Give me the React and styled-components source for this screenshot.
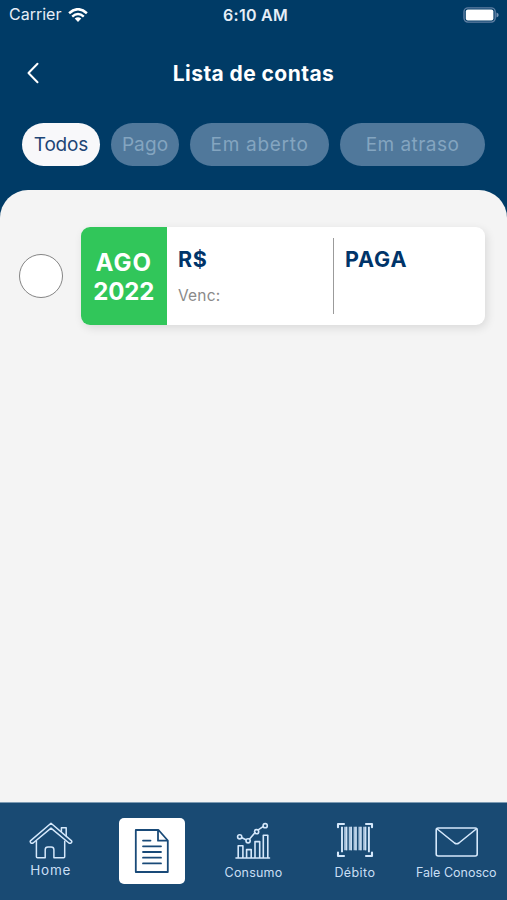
import React from 'react';
import styled, { createGlobalStyle } from 'styled-components';

const GlobalStyle = createGlobalStyle`
  *, *::before, *::after { box-sizing: border-box; }
  body { margin: 0; background: #f4f4f4; }
  h1 { margin: 0; }
  button { border: 0; padding: 0; background: none; font: inherit; color: inherit; }
  svg { display: block; }
`;

const Screen = styled.div`
  width: 507px;
  height: 900px;
  display: flex;
  flex-direction: column;
  overflow: hidden;
  background: #003b66;
  font-family: Inter, "Open Sans", sans-serif;
`;

const Text = styled.span`
  font-size: ${(p) => p.$size}px;
  font-weight: ${(p) => p.$weight || 400};
  letter-spacing: ${(p) => p.$track || 0}px;
  line-height: ${(p) => p.$line || p.$size * 1.2}px;
  white-space: nowrap;
`;

const StatusBar = styled.div`
  height: 30px;
  padding: 0 8px 0 9px;
  display: grid;
  grid-template-columns: 1fr auto 1fr;
  align-items: center;
  color: #e6eef7;
`;

const Carrier = styled.div`
  display: flex;
  align-items: center;
  gap: 7px;
`;

const Clock = styled(Text)`
  padding: 1px 0 0 3px;
`;

const BatterySlot = styled.div`
  justify-self: end;
`;

const TitleBar = styled.header`
  height: 93px;
  padding: 0 26px 7px;
  display: grid;
  grid-template-columns: 40px 1fr 40px;
  align-items: center;
  justify-items: center;
  color: #fff;
`;

const Title = styled(Text)`
  padding-top: 2px;
`;

const BackButton = styled.button`
  justify-self: start;
`;

const Filters = styled.div`
  height: 67px;
  padding: 0 22px;
  display: flex;
  align-items: flex-start;
  gap: 11px;
`;

const Pill = styled.button`
  flex: none;
  width: ${(p) => p.$width}px;
  height: 43px;
  padding-top: 2px;
  border-radius: 22px;
  display: flex;
  align-items: center;
  justify-content: center;
  background: ${(p) => (p.$active ? '#f8f8fa' : '#50789b')};
  color: ${(p) => (p.$active ? '#1d4676' : '#84a5c0')};
`;

const Content = styled.main`
  flex: 1;
  padding: 37px 22px 0 19px;
  border-radius: 28px 28px 0 0;
  background: #f4f4f4;
`;

const BillRow = styled.div`
  display: flex;
  align-items: center;
  gap: 17.5px;
`;

const Radio = styled.button`
  flex: none;
  width: 44px;
  height: 44px;
  border: 1.4px solid #858585;
  border-radius: 50%;
  background: #fff;
`;

const BillCard = styled.article`
  flex: 1;
  height: 98px;
  display: flex;
  border-radius: 9px;
  overflow: hidden;
  background: #fff;
  box-shadow: 2px 3px 10px rgba(0, 0, 0, 0.11);
`;

const Month = styled.div`
  width: 86.5px;
  padding-top: 2px;
  display: flex;
  flex-direction: column;
  align-items: center;
  justify-content: center;
  background: #31c65a;
  color: #fff;
`;

const Amount = styled.div`
  width: 166px;
  padding: 18px 0 0 11px;
  display: flex;
  flex-direction: column;
  gap: 9px;
  color: #003469;
`;

const Due = styled(Text)`
  color: #8a8a8a;
`;

const Divider = styled.div`
  width: 1px;
  height: 76px;
  margin-top: 11px;
  background: #9b9b9b;
`;

const Status = styled.div`
  padding: 18px 0 0 11px;
  color: #003469;
`;

const TabBar = styled.nav`
  height: 98px;
  display: grid;
  grid-template-columns: repeat(5, 1fr);
  border-top: 1px solid #7d9bb3;
  background: #194a73;
  color: #c9dff5;
`;

const Tab = styled.button`
  padding-top: ${(p) => p.$top}px;
  display: flex;
  flex-direction: column;
  align-items: center;
  gap: ${(p) => p.$gap || 0}px;
`;

const ActiveTile = styled.span`
  width: 66px;
  height: 66px;
  display: grid;
  place-items: center;
  border-radius: 5px;
  background: #fff;
`;

const Icon = styled.svg`
  fill: none;
  stroke: ${(p) => p.$color || '#d5e8fb'};
  stroke-width: ${(p) => p.$stroke || 1.5};
  stroke-linecap: round;
  stroke-linejoin: round;
`;

const Wifi = () => (
  <svg width="20" height="14" viewBox="0 0 20 14">
    <g fill="none" stroke="#fff" strokeWidth="2.5">
      <path d="M1.1 5.2Q10-2.8 18.9 5.2" />
      <path d="M4.2 8.6Q10 3.4 15.8 8.6" />
    </g>
    <path d="M6.7 10.6Q10 7.8 13.3 10.6L10 14Z" fill="#fff" />
  </svg>
);

const Battery = () => (
  <svg width="36" height="16" viewBox="0 0 36 16">
    <rect x="1" y=".9" width="31.2" height="14.2" rx="4" fill="none" stroke="#5f7fa3" strokeWidth="1.4" />
    <rect x="2.8" y="2.4" width="27.6" height="11.2" rx="2" fill="#fff" />
    <path d="M33.5 5.5Q35.7 6.3 35.7 8T33.5 10.5Z" fill="#7895b5" />
  </svg>
);

const Back = () => (
  <Icon width="14" height="22" viewBox="0 0 14 22" $color="#fff" $stroke="2">
    <path d="M11.5 1.7 2.5 11l9 9.2" />
  </Icon>
);

const Home = () => (
  <Icon width="44" height="38" viewBox="0 0 44 38">
    <path d="M22 1.3 1.7 18.6q-1 1 0 2.1t2.4.3L22 6.2l17.9 14.8q1.3.8 2.4-.3t0-2.1Z" />
    <path d="M7.4 19.2v15.5q0 1 1 1h7.8v-8q0-2.7 2.7-2.7h3.3q2.7 0 2.7 2.7v8h9.8q1 0 1-1V19.2M32.4 9.6V5.7h4.8v8" />
  </Icon>
);

const Document = () => (
  <Icon width="36" height="46" viewBox="0 0 36 46" $color="#194a78" $stroke="1.8">
    <path d="M24.5 2H1.8v42h32V12.5ZM24 2v10.7h9.8" />
    <path d="M9 12.6h7.5M9 18.3h18M9 24h18M9 29.7h18M9 35.4h18" />
  </Icon>
);

const Chart = () => (
  <Icon width="36" height="38" viewBox="0 0 36 38" $stroke="1.6">
    <path d="M1 36h33.5M3.2 36V23.8h4.7V36M11.6 36v-8.4h4.6V36M20 36V19.6h4.7V36M28.3 36V13.3h4.5V36" />
    <path d="m6.9 15.8 4 2M14.8 16.8l5.3-6.3M23.6 7.6 28 4.7" />
    <circle cx="4.7" cy="14.8" r="2.1" />
    <circle cx="13.1" cy="18.8" r="2.1" />
    <circle cx="21.6" cy="9.7" r="2.1" />
    <circle cx="30.2" cy="3.7" r="2.1" />
  </Icon>
);

const Barcode = () => (
  <Icon width="38" height="36" viewBox="0 0 38 36" $stroke="2.1">
    <path d="M2 5.3V2h6M30 2h6v3.3M2 30.5V34h6M30 34h6v-3.5" />
    <path strokeLinecap="butt" strokeWidth="1.9" d="M6 4.8v25.5M32.9 4.8v25.5" />
    <path strokeLinecap="butt" strokeWidth="3.1" stroke="#abc4dc" d="M9.7 4.8v23.5M14.3 4.8v23.5M19.1 4.8v23.5M24 4.8v23.5M28.7 4.8v23.5" />
    <path strokeLinecap="butt" strokeWidth="1" d="M10.7 4.8v23.5M15.3 4.8v23.5M20.1 4.8v23.5M25 4.8v23.5M29.7 4.8v23.5" />
  </Icon>
);

const Mail = () => (
  <Icon width="44" height="30" viewBox="-1 0 44 30" $stroke="1.6">
    <rect x="1.2" y="1" width="41" height="28" rx="2" />
    <path d="m2.2 2 17.3 14q2.2 1.6 4.4 0L41.2 2" />
  </Icon>
);

const filters = [
  { label: 'Todos', width: 78, active: true, track: -0.15 },
  { label: 'Pago', width: 68, track: 0.1 },
  { label: 'Em aberto', width: 139, track: 0.7 },
  { label: 'Em atraso', width: 145, track: 0.45 },
];

export default function App() {
  return (
    <Screen>
      <GlobalStyle />
      <StatusBar>
        <Carrier>
          <Text $size={16}>Carrier</Text>
          <Wifi />
        </Carrier>
        <Clock $size={16} $weight={600} $track={0.25}>6:10 AM</Clock>
        <BatterySlot><Battery /></BatterySlot>
      </StatusBar>
      <TitleBar>
        <BackButton aria-label="Voltar"><Back /></BackButton>
        <Title as="h1" $size={21} $weight={700} $track={0.42}>Lista de contas</Title>
      </TitleBar>
      <Filters>
        {filters.map((f) => (
          <Pill key={f.label} $width={f.width} $active={f.active}>
            <Text $size={19} $track={f.track}>{f.label}</Text>
          </Pill>
        ))}
      </Filters>
      <Content>
        <BillRow>
          <Radio aria-label="Selecionar conta" />
          <BillCard>
            <Month>
              <Text $size={24} $weight={700} $line={29} $track={1.1}>AGO</Text>
              <Text $size={24} $weight={700} $line={29} $track={-0.1}>2022</Text>
            </Month>
            <Amount>
              <Text $size={21.5} $weight={700} $line={29} $track={0.6}>R$</Text>
              <Due $size={15.5} $line={26} $track={0.2}>Venc:</Due>
            </Amount>
            <Divider />
            <Status>
              <Text $size={21.5} $weight={700} $line={29} $track={0.9}>PAGA</Text>
            </Status>
          </BillCard>
        </BillRow>
      </Content>
      <TabBar>
        <Tab $top={19} $gap={2}>
          <Home />
          <Text $size={13.5} $track={0.8}>Home</Text>
        </Tab>
        <Tab $top={15} aria-label="Contas">
          <ActiveTile><Document /></ActiveTile>
        </Tab>
        <Tab $top={19} $gap={5}>
          <Chart />
          <Text $size={12.5} $track={0.2}>Consumo</Text>
        </Tab>
        <Tab $top={19} $gap={7}>
          <Barcode />
          <Text $size={12.5} $track={0.4}>Débito</Text>
        </Tab>
        <Tab $top={24} $gap={8}>
          <Mail />
          <Text $size={12.5}>Fale Conosco</Text>
        </Tab>
      </TabBar>
    </Screen>
  );
}
